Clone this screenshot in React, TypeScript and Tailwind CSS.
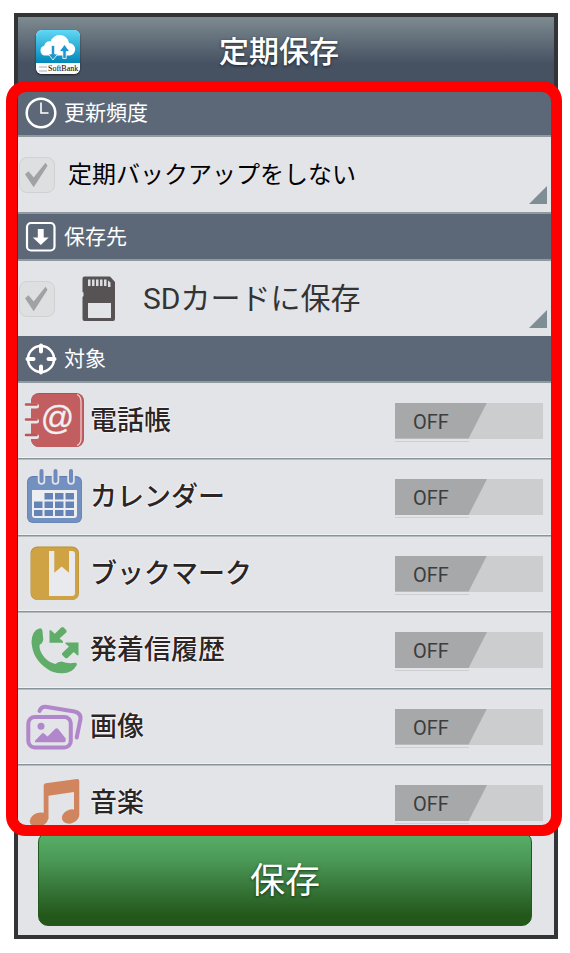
import { useState } from 'react';
import type { ReactNode } from 'react';

const BookIcon = () => (
    <svg viewBox="0 0 64 64" className="w-16 h-16 shrink-0" aria-hidden="true">
        <rect x="9" y="4" width="53" height="54" rx="8" fill="#b04f51" />
        <rect x="9" y="5" width="52.500" height="53" rx="8" fill="#c25e60" />
        <path d="M55 5.500q4 1.500 4 7.500v36q0 6-4 7.500" fill="none" stroke="#efd5d7" strokeWidth="1.200" />
        <path d="M4 17h10.500M4 32h10.500M4 47.500h10.500" stroke="#e6e7eb" strokeWidth="5" strokeLinecap="round" />
        <path d="M4 15.500h10.500M4 30.500h10.500M4 46h10.500" stroke="#bd5557" strokeWidth="2.600" strokeLinecap="round" />
        <text x="35.500" y="40" textAnchor="middle" fontSize="33" fontFamily="Liberation Sans, sans-serif" fill="#eef0f2" stroke="#eef0f2" strokeWidth="0.300">@</text>
    </svg>
);

const CalendarIcon = () => (
    <svg viewBox="0 0 64 64" className="w-16 h-16 shrink-0" aria-hidden="true">
        <rect x="5" y="11" width="55" height="47" rx="6" fill="#5f7db0" />
        <rect x="5.500" y="12" width="54" height="45.500" rx="6" fill="#7290c0" />
        <path d="M19.500 6v10M33.500 6v10M49 6v10" stroke="#e3e4e8" strokeWidth="7.500" strokeLinecap="round" />
        <path d="M19.500 6v10M33.500 6v10M49 6v10" stroke="#6f8bbd" strokeWidth="4" strokeLinecap="round" />
        <path d="M10 25h45v25q0 3-3 3H13q-3 0-3-3z" fill="#eceef1" />
        <g fill="#6583b6">
            <path d="M22.500 28h8.500v6.500h-8.500zM33 28h8.500v6.500h-8.500zM43.500 28h8.500v6.500h-8.500z" />
            <path d="M12 36.500h8.500v6.500h-8.500zM22.500 36.500h8.500v6.500h-8.500zM33 36.500h8.500v6.500h-8.500zM43.500 36.500h8.500v6.500h-8.500z" />
            <path d="M12 45h8.500v6h-8.500zM22.500 45h8.500v6h-8.500zM33 45h8.500v6h-8.500zM43.500 45h8.500v6h-8.500z" />
        </g>
    </svg>
);

const BookmarkIcon = () => (
    <svg viewBox="0 0 64 64" className="w-16 h-16 shrink-0" aria-hidden="true">
        <rect x="8.500" y="4.500" width="48.500" height="53.500" rx="7" fill="#b98f36" />
        <rect x="9" y="5.500" width="47.500" height="52.500" rx="7" fill="#cfa243" />
        <path d="M27 9h5.300v21.800l7.400-6.300 7.300 6.300V9h3q3 0 3 3v39q0 3-3 3H27z" fill="#e9eaee" />
    </svg>
);

const CallIcon = () => (
    <svg viewBox="0 0 64 64" className="w-16 h-16 shrink-0" aria-hidden="true">
        <g fill="#5fad69">
            <path d="M17.300 10.500Q20 9.500 20.500 13L21.300 22Q21 25 17.500 27Q17 33 22.500 39.500Q27 44.500 33.500 46Q35.500 43.500 39.700 43.500Q46 46 53 44.700Q56 45 54.300 47.800Q50 55.500 40.300 55.300Q31 55.500 24.700 50.500Q10.500 41 9.500 24Q10 12.500 17.300 10.500Z" />
            <path d="M27.500 12.300h1.500l3.800 3.500L39.500 9.300h2l3 3.200v1.700L37.500 20.500l3.500 2.700v1.500H27.500z" strokeWidth="1" />
            <path d="M56.500 24.500V37.300h-1.300l-3.500-3.300-6.500 6.300h-1.700l-3.500-3.500v-1.500l7-6.800-3.500-2.700v-1.300z" />
        </g>
    </svg>
);

const PhotoIcon = () => (
    <svg viewBox="0 0 64 64" className="w-16 h-16 shrink-0" aria-hidden="true">
        <g fill="none" stroke="#b286ca" strokeWidth="4" strokeLinecap="round" strokeLinejoin="round">
            <rect x="6.300" y="22" width="42.500" height="30.500" rx="6.500" />
            <path d="M17.500 16Q19.500 11 25 12L52.500 16.500Q59 18 58.500 24L54.700 42.500" />
        </g>
        <g fill="#b286ca">
            <circle cx="19" cy="31.200" r="3.500" />
            <path d="M13 47.300v-1.500l7-7.300q1-.8 2 0l3.500 3 7.800-7.800q1.400-1 2.700 0l7.700 9.800v2.500q-.5 1.300-2 1.300z" />
        </g>
    </svg>
);

const MusicIcon = () => (
    <svg viewBox="0 0 64 64" className="w-16 h-16 shrink-0" aria-hidden="true">
        <g fill="#d1855e">
            <path d="M21.700 14.500q0-1.800 2-2.200L55 8q2.300-.2 2.300 2v34H52V21l-25.500 3.700V48h-4.800z" />
            <ellipse cx="17" cy="48.800" rx="9.500" ry="7" transform="rotate(-22 17 48.800)" />
            <ellipse cx="48.500" cy="45.500" rx="9" ry="6.800" transform="rotate(-22 48.500 45.500)" />
        </g>
    </svg>
);

const ClockIcon = () => (
    <svg viewBox="0 0 32 32" className="w-8 h-8" fill="none" stroke="#fff" aria-hidden="true">
        <circle cx="16" cy="16" r="14.300" strokeWidth="2.500" />
        <path d="M16 5.500v10.500h7.500" strokeWidth="1.600" />
    </svg>
);

const DownloadIcon = () => (
    <svg viewBox="0 0 32 32" className="w-8 h-8" aria-hidden="true">
        <rect x="2" y="2" width="27.500" height="27.500" rx="4" fill="none" stroke="#fff" strokeWidth="2.200" />
        <path d="M12.800 8h5.900v8.500h5l-7.900 7.500-8-7.500h5z" fill="#fff" />
    </svg>
);

const TargetIcon = () => (
    <svg viewBox="0 0 32 32" className="w-8 h-8" fill="none" stroke="#fff" aria-hidden="true">
        <circle cx="16" cy="16" r="13" strokeWidth="2.500" />
        <path d="M16 2.500v6M16 23.500v6M2.500 16h6M23.500 16h6" strokeWidth="4" strokeLinecap="round" />
    </svg>
);

const SdCardIcon = () => (
    <svg viewBox="0 0 34 46" className="w-[34px] h-[46px] shrink-0" aria-hidden="true">
        <path d="M2.500.5H28L33 6v37q0 2-2 2H2.500q-2 0-2-2V21l1-1v-3.500l-1-.5V2.500q0-2 2-2z" fill="#575354" />
        <path d="M6 3.500h2.500V10H6zM10 3.500h2.500V10H10zM14 3.500h2.500V10H14zM18 3.500h2.500V10H18zM22 3.500h2.500V10H22zM26 4.500l2.500 2V11H26z" fill="#dcdde0" />
        <rect x="6" y="27" width="23" height="15" fill="#e3e4e8" />
    </svg>
);

const AppLogo = () => (
    <div className="w-11 h-11 rounded-md overflow-hidden bg-white shadow-[0_1px_2px_rgba(0,0,0,0.6)]">
        <svg viewBox="0 0 44 33" className="block w-11 h-[33px]" aria-hidden="true">
            <defs>
                <linearGradient id="sky" x1="0" y1="0" x2="0" y2="1">
                    <stop offset="0" stopColor="#60d8f6" />
                    <stop offset="1" stopColor="#0086b8" />
                </linearGradient>
            </defs>
            <rect width="44" height="33" fill="url(#sky)" />
            <path d="M9 25.500a5 5 0 0 1-.8-9.800 6 6 0 0 1 6.500-4.500A9.500 9.500 0 0 1 33 13a6.300 6.300 0 0 1 1 12.500z" fill="#fff" />
            <path d="M15.300 15.500h3.400v8.500h3L17 30l-4.700-6h3z" fill="#2195cf" stroke="#fff" strokeWidth=".8" />
            <path d="M26.800 28.500h3.400v-7h3.500L28.500 14.500l-5.200 7h3.500z" fill="#2195cf" stroke="#fff" strokeWidth=".8" />
        </svg>
        <div className="h-[11px] flex items-center gap-px pl-[3px] bg-gray-50">
            <span className="shrink-0 w-2 h-1.5 border-y-2 border-gray-300" />
            <span className="font-['Liberation_Serif',serif] text-[8px] leading-[11px] text-black">SoftBank</span>
        </div>
    </div>
);

const targets = [
    { id: 'contacts', label: '電話帳', icon: <BookIcon /> },
    { id: 'calendar', label: 'カレンダー', icon: <CalendarIcon /> },
    { id: 'bookmark', label: 'ブックマーク', icon: <BookmarkIcon /> },
    { id: 'calls', label: '発着信履歴', icon: <CallIcon /> },
    { id: 'images', label: '画像', icon: <PhotoIcon /> },
    { id: 'music', label: '音楽', icon: <MusicIcon /> },
];

function SectionTitle({ icon, children }: { icon: ReactNode; children: ReactNode }) {
    return (
        <h2 className="h-[47px] flex items-center gap-[7px] pl-[7px] bg-[#5c6878] border-b-2 border-[#8f9a9f] text-white text-[21px] leading-8">
            {icon}
            {children}
        </h2>
    );
}

function CheckBox({ label }: { label: string }) {
    return (
        <span className="grid shrink-0 w-9 h-9">
            <input
                type="checkbox"
                defaultChecked
                disabled
                aria-label={label}
                className="appearance-none col-start-1 row-start-1 w-9 h-9 rounded-lg bg-[#dddfe1] border border-[#cfd1d3]"
            />
            <svg viewBox="0 0 36 36" className="col-start-1 row-start-1 w-9 h-9 pointer-events-none" aria-hidden="true">
                <path d="M9.500 14.300L6 17.300 14.700 30.200 28.500 8.700 26.500 5.800 14.700 20.500z" fill="#a1a2a3" />
            </svg>
        </span>
    );
}

function Corner() {
    return <span className="absolute right-[7px] bottom-2 w-[18px] h-[18px] bg-[#7f8d95] [clip-path:polygon(100%_0,100%_100%,0_100%)] pointer-events-none" />;
}

export default function App() {
    const [enabled, setEnabled] = useState<Record<string, boolean>>({});

    const toggle = (id: string) => {
        setEnabled((prev) => ({ ...prev, [id]: !prev[id] }));
    };

    return (
        <div className="min-h-screen bg-white pt-[13px] pl-[14px] pr-3 pb-[14px] font-[Roboto,'Noto_Sans_CJK_JP',sans-serif]" lang="ja">
            <main className="border-4 border-[#333436] bg-[#e3e4e8]">
                <header className="relative grid grid-cols-[44px_1fr_44px] pl-[18px] pr-8 pt-[13px] pb-4 bg-linear-to-b from-[#7e8b91] to-[#465161] to-65% z-10">
                    <AppLogo />
                    <h1 className="text-center text-white text-3xl leading-[44px] font-medium [text-shadow:0_1px_3px_rgba(0,0,0,0.6)]">定期保存</h1>
                </header>

                <div className="relative z-20">
                    {/* Scrolling settings area */}
                    <div className="h-[740px] overflow-hidden">
                        <SectionTitle icon={<ClockIcon />}>更新頻度</SectionTitle>
                        <div className="relative h-[77px] flex items-center gap-3 pl-px border-b-2 border-[#8f9a9f]">
                            <CheckBox label="更新頻度" />
                            <select aria-label="更新頻度" className="appearance-none flex-1 h-10 ml-px bg-transparent text-2xl text-black">
                                <option>定期バックアップをしない</option>
                            </select>
                            <Corner />
                        </div>

                        <SectionTitle icon={<DownloadIcon />}>保存先</SectionTitle>
                        <div className="relative h-[75px] flex items-center pl-px">
                            <CheckBox label="保存先" />
                            <span className="pl-[27px] pr-[27px]">
                                <SdCardIcon />
                            </span>
                            <select aria-label="保存先" className="appearance-none flex-1 h-12 bg-transparent text-3xl text-[#333436]">
                                <option>SDカードに保存</option>
                            </select>
                            <Corner />
                        </div>

                        <SectionTitle icon={<TargetIcon />}>対象</SectionTitle>
                        <ul>
                            {targets.map((t) => (
                                <li key={t.id} className="h-[76px] even:h-[77px] flex items-center gap-1 pl-1 pr-[11px] border-b border-[#87949a] shadow-[0_1px_0_#b4bcc0,inset_0_-1px_0_#f0f1f4]">
                                    {t.icon}
                                    <span className="flex-1 text-[27px] leading-10 font-medium text-[#2c2526] [text-shadow:0_0_2px_#fff,0_0_2px_#fff]">{t.label}</span>
                                    <label className="relative w-[148px] h-9 bg-[#cccdcf] cursor-pointer">
                                        <input
                                            type="checkbox"
                                            role="switch"
                                            aria-label={t.label}
                                            className="sr-only"
                                            checked={!!enabled[t.id]}
                                            onChange={() => toggle(t.id)}
                                        />
                                        <span className="block w-[92px] h-9 pl-[18px] pt-[3px] bg-[#a7a8aa] text-xl leading-8 text-[#3c3d3e] [clip-path:polygon(0_0,100%_0,80%_100%,0_100%)]">
                                            {enabled[t.id] ? 'ON' : 'OFF'}
                                        </span>
                                        <span className="absolute left-0 -bottom-[3px] w-[74px] h-px bg-[#cdced0]" />
                                    </label>
                                </li>
                            ))}
                        </ul>
                    </div>
                    <div className="absolute -top-[9px] -bottom-1.5 -left-3 -right-2 border-[11px] border-[#ff0000] rounded-[20px] pointer-events-none" />
                </div>

                <div className="pt-0.5 pl-5 pr-[22px] pb-[9px]">
                    <button
                        type="button"
                        className="w-full h-[94px] pt-1.5 rounded-[10px] border border-[#22591f] bg-linear-to-b from-[#58b068] via-[#4b9857] via-30% to-[#24571a] to-90% text-white text-[35px] leading-10 [text-shadow:0_1px_3px_rgba(0,0,0,0.6)]"
                    >
                        保存
                    </button>
                </div>
            </main>
        </div>
    );
}
